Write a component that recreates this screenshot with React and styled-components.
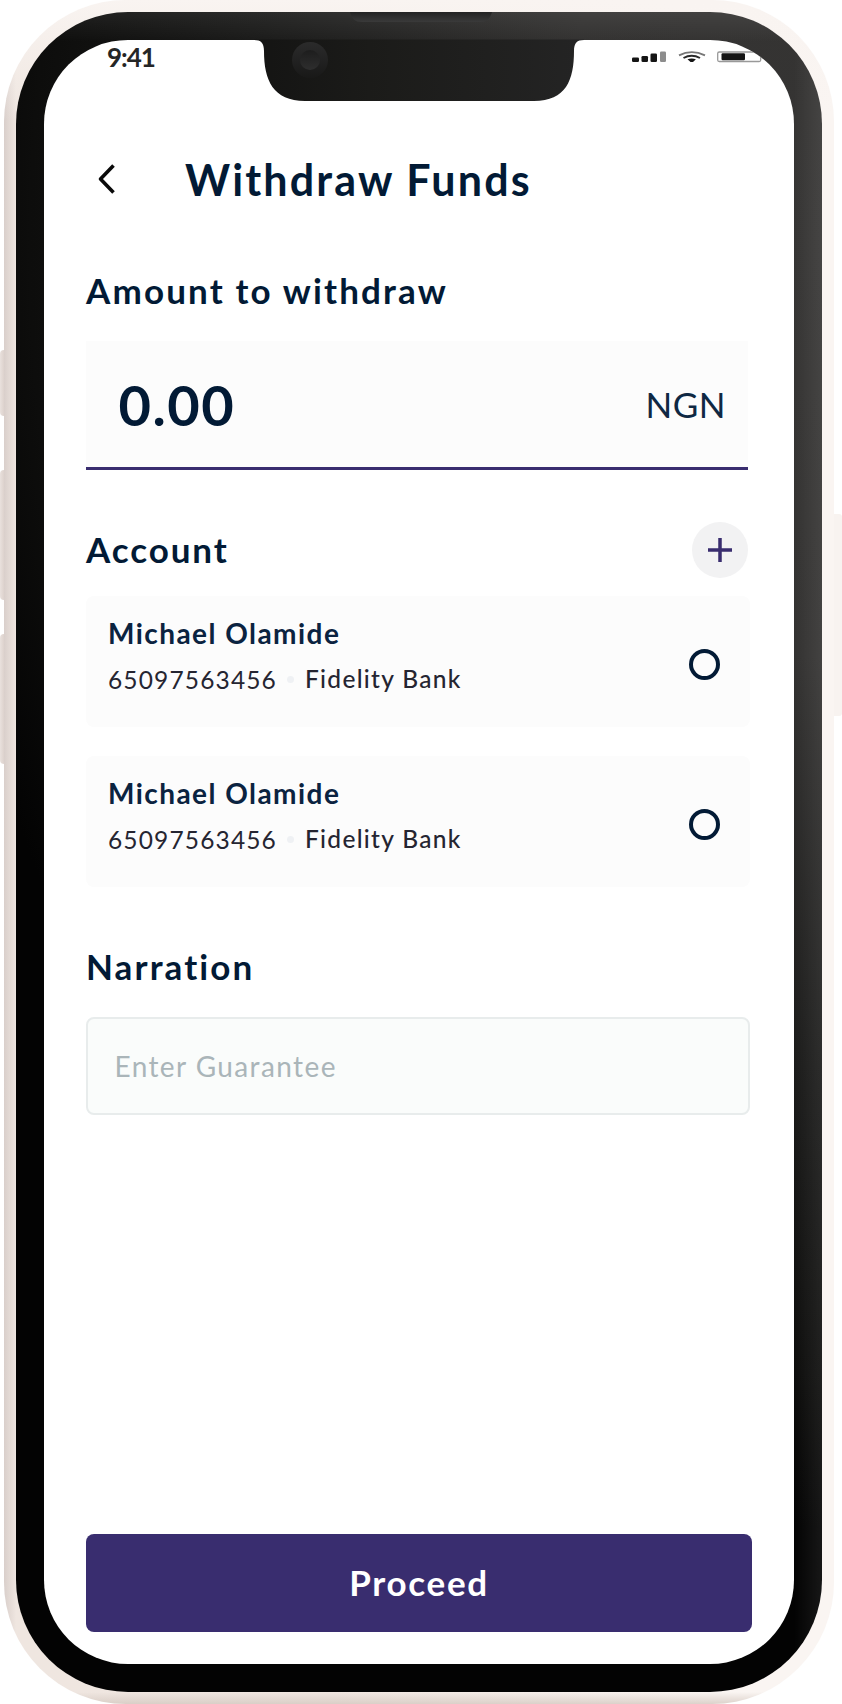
import React from "react";
import styled, { createGlobalStyle } from "styled-components";

const navy = "#021a35";
const purple = "#392d6f";

const GlobalStyle = createGlobalStyle`
  * { box-sizing: border-box; }
  body { margin: 0; background: #fff; font-family: Lato, "Open Sans", sans-serif; color: ${navy}; }
  button, input { font-family: inherit; border: 0; padding: 0; background: none; }
`;

const Stage = styled.div`
  position: relative;
  width: 842px;
  height: 1704px;
  padding: 0 8px 0 4px;
  overflow: hidden;
`;

const SideButton = styled.i`
  position: absolute;
  ${p => p.$side}: 0;
  top: ${p => p.$top}px;
  width: ${p => (p.$side === "left" ? 4 : 8)}px;
  height: ${p => p.$height}px;
  border-radius: ${p => (p.$side === "left" ? "4px 0 0 4px" : "0 3px 3px 0")};
  background: ${p => (p.$side === "left" ? "linear-gradient(90deg, #e9e1dd, #ddd2cd)" : "#f8f3f0")};
`;

const Frame = styled.div`
  height: 100%;
  padding: 12px;
  border-radius: 122px;
  background:
    linear-gradient(180deg, rgba(213, 201, 193, 0) 99.3%, rgba(213, 201, 193, 0.8) 100%),
    linear-gradient(180deg, #f9f4f1 0, rgba(249, 244, 241, 0) 120px),
    linear-gradient(90deg, #d9cfcb 0, #efe6e0 12px, #f0e6e0 40%, #faf5f2 85%);
`;

const Bezel = styled.div`
  height: 100%;
  padding: 28px;
  border-radius: 112px;
  background:
    linear-gradient(180deg, rgba(255, 255, 255, 0.07) 0, rgba(255, 255, 255, 0) 30px),
    linear-gradient(90deg, rgba(255, 255, 255, 0) 778px, rgba(255, 255, 255, 0.08) 806px),
    radial-gradient(ellipse 900px 1280px at 100% 14%, #363534 0, #333231 32%, #1b1b1a 64%, #0d0d0c 88%, #030303 100%);
`;

const Screen = styled.div`
  position: relative;
  height: 100%;
  border-radius: 84px;
  overflow: hidden;
  background: #fff;
  display: flex;
  flex-direction: column;
`;

const Notch = styled.svg`
  position: absolute;
  left: 251px;
  top: 12px;
`;

const StatusBar = styled.div`
  display: flex;
  justify-content: space-between;
  height: 60px;
  padding: 4px 32px 0 63px;
`;

const Time = styled.span`
  font-size: 26px;
  line-height: 26px;
  font-weight: 700;
  letter-spacing: -1px;
  color: #252525;
`;

const StatusIcons = styled.svg`
  margin-top: 5px;
`;

const Header = styled.header`
  display: flex;
  align-items: center;
  height: 50px;
  margin-top: 55px;
  padding-left: 53px;
`;

const BackButton = styled.button`
  width: 20px;
  height: 32px;
  margin: -2px 68px 0 0;
`;

const Title = styled.h1`
  margin: 0;
  font-size: 43px;
  line-height: 50px;
  font-weight: 700;
  letter-spacing: 2.15px;
  white-space: nowrap;
`;

const Form = styled.main`
  flex: 1;
  display: flex;
  flex-direction: column;
  padding: 66px 42px 32px;
`;

const Label = styled.h2`
  margin: 0;
  padding-bottom: 2px;
  font-size: 35px;
  line-height: 38px;
  font-weight: 700;
  letter-spacing: ${p => p.$spacing || 2.15}px;
  white-space: nowrap;
`;

const AmountField = styled.div`
  display: flex;
  justify-content: space-between;
  align-items: center;
  width: 662px;
  height: 129px;
  margin-top: 30px;
  padding: 0 22px 0 32.5px;
  background: #fcfcfc;
  border-bottom: 3.5px solid ${purple};
`;

const Amount = styled.span`
  padding-top: 1px;
  font-size: 56px;
  line-height: 60px;
  font-weight: 700;
  letter-spacing: 1.5px;
`;

const Currency = styled.span`
  font-size: 35px;
  line-height: 58px;
  padding-bottom: 1px;
  letter-spacing: 0.5px;
  color: #0f2843;
`;

const SectionHead = styled.div`
  display: flex;
  align-items: center;
  justify-content: space-between;
  width: 662px;
  height: 56px;
  margin: 52px 0 18px;
`;

const AddButton = styled.button`
  display: grid;
  place-items: center;
  width: 56px;
  height: 56px;
  border-radius: 50%;
  background: #f2f2f3;
`;

const AccountList = styled.div`
  display: flex;
  flex-direction: column;
  gap: 29px;
`;

const AccountCard = styled.div`
  display: flex;
  justify-content: space-between;
  width: 664px;
  height: 131px;
  padding: 22px 30px 0 22px;
  border-radius: 8px;
  background: #fcfcfc;
`;

const Holder = styled.div`
  font-size: 28px;
  line-height: 30px;
  font-weight: 700;
  letter-spacing: 1.45px;
  color: #0b2340;
`;

const Details = styled.div`
  display: flex;
  align-items: center;
  margin-top: 15px;
  font-size: 24.5px;
  line-height: 30px;
  color: #252531;
`;

const AccountNumber = styled.span`
  padding-top: 2px;
  letter-spacing: 1.15px;
`;

const Dot = styled.i`
  width: 7px;
  height: 7px;
  margin: 0 11px 0 10px;
  border-radius: 50%;
  background: #eff1f4;
`;

const Bank = styled.span`
  font-weight: 500;
  letter-spacing: 1.3px;
`;

const Radio = styled.span`
  width: 31px;
  height: 31px;
  margin-top: 31px;
  border: 4px solid ${navy};
  border-radius: 50%;
`;

const NarrationSection = styled.section`
  margin-top: 60px;
`;

const NarrationInput = styled.input`
  display: block;
  width: 664px;
  height: 98px;
  margin-top: 30px;
  padding: 0 28px 0 26.5px;
  border: 2px solid #e8ecec;
  border-radius: 8px;
  background: #fafcfb;
  font-size: 28px;
  letter-spacing: 1.4px;
  &::placeholder { color: #aab5b9; opacity: 1; }
`;

const ProceedButton = styled.button`
  width: 666px;
  height: 98.5px;
  margin-top: auto;
  padding-bottom: 2px;
  border-radius: 8px;
  background: ${purple};
  color: #fff;
  font-size: 35px;
  line-height: 40px;
  font-weight: 700;
  letter-spacing: 1.7px;
`;

const accounts = [
  { id: 1, holder: "Michael Olamide", number: "65097563456", bank: "Fidelity Bank" },
  { id: 2, holder: "Michael Olamide", number: "65097563456", bank: "Fidelity Bank" },
];

function NotchArt() {
  return (
    <Notch width="336" height="90" viewBox="251 12 336 90">
      <defs>
        <linearGradient id="notch" x1="0" x2="1">
          <stop offset="0" stopColor="#141413" />
          <stop offset="0.35" stopColor="#1b1b19" />
          <stop offset="1" stopColor="#242424" />
        </linearGradient>
        <linearGradient id="speaker" x1="0" x2="0" y1="0" y2="1">
          <stop offset="0" stopColor="#232323" />
          <stop offset="1" stopColor="#3a3a3a" />
        </linearGradient>
        <linearGradient id="ring" x1="0" x2="0" y1="0" y2="1">
          <stop offset="0" stopColor="#2b2b2b" />
          <stop offset="1" stopColor="#191918" />
        </linearGradient>
        <linearGradient id="lens" x1="0" x2="0" y1="0" y2="1">
          <stop offset="0" stopColor="#1d1d1d" />
          <stop offset="1" stopColor="#2e2e2e" />
        </linearGradient>
      </defs>
      <path d="M254 39.5V40C261 40 264 43 264 51C264 80 273 101 305 101H534C566 101 574 80 574 51C574 43 577 40 584 40V39.5Z" fill="url(#notch)" />
      <path d="M350 12H492C490 19 487 22 480 22H362C355 22 352 19 350 12Z" fill="url(#speaker)" />
      <circle cx="310" cy="60" r="18" fill="url(#ring)" />
      <circle cx="310" cy="60" r="10" fill="url(#lens)" />
    </Notch>
  );
}

function StatusArt() {
  return (
    <StatusIcons width="131" height="14" viewBox="631 49 131 14">
      <g fill="#151515">
        <rect x="632" y="57.5" width="7" height="4.5" rx="1.3" />
        <rect x="641.5" y="56" width="6.5" height="6" rx="1.3" />
        <rect x="650.5" y="53.5" width="6.5" height="8.5" rx="1.3" />
        <rect x="660" y="51.5" width="6" height="10.5" rx="1.3" fill="#8d8d8d" />
        <path d="M687.5 59.2Q691.7 57.8 695.9 59.2L693 62H690.5Z" />
      </g>
      <path d="M679 55.4Q691.7 48.8 705 55.4" fill="none" stroke="#777" strokeWidth="1.8" />
      <path d="M683.5 58Q691.7 53.4 700 58" fill="none" stroke="#2a2a2a" strokeWidth="2" />
      <rect x="717.7" y="52" width="43" height="9.5" rx="1.5" fill="none" stroke="#999" strokeWidth="1.3" />
      <rect x="721.5" y="53.2" width="23.5" height="7" rx="1.2" fill="#151515" />
    </StatusIcons>
  );
}

export default function App() {
  return (
    <Stage>
      <GlobalStyle />
      <SideButton $side="left" $top={350} $height={66} />
      <SideButton $side="left" $top={470} $height={130} />
      <SideButton $side="left" $top={634} $height={130} />
      <SideButton $side="right" $top={514} $height={202} />
      <Frame>
        <Bezel>
          <Screen>
            <StatusBar>
              <Time>9:41</Time>
              <StatusArt />
            </StatusBar>
            <Header>
              <BackButton aria-label="Back">
                <svg width="20" height="32" viewBox="0 0 20 32" fill="none" stroke="#0a0a0a" strokeWidth="3.6" strokeLinejoin="round">
                  <path d="M16.5 2.5L3.5 16L16.5 29.5" />
                </svg>
              </BackButton>
              <Title>Withdraw Funds</Title>
            </Header>
            <Form>
              <Label>Amount to withdraw</Label>
              <AmountField>
                <Amount>0.00</Amount>
                <Currency>NGN</Currency>
              </AmountField>
              <SectionHead>
                <Label $spacing={1.9}>Account</Label>
                <AddButton aria-label="Add account">
                  <svg width="24" height="24" viewBox="0 0 24 24" stroke={purple} strokeWidth="3.5">
                    <path d="M12 0V24M0 12H24" />
                  </svg>
                </AddButton>
              </SectionHead>
              <AccountList>
                {accounts.map(a => (
                  <AccountCard key={a.id}>
                    <div>
                      <Holder>{a.holder}</Holder>
                      <Details>
                        <AccountNumber>{a.number}</AccountNumber>
                        <Dot />
                        <Bank>{a.bank}</Bank>
                      </Details>
                    </div>
                    <Radio />
                  </AccountCard>
                ))}
              </AccountList>
              <NarrationSection>
                <Label $spacing={2.1}>Narration</Label>
                <NarrationInput placeholder="Enter Guarantee" />
              </NarrationSection>
              <ProceedButton>Proceed</ProceedButton>
            </Form>
          </Screen>
        </Bezel>
      </Frame>
      <NotchArt />
    </Stage>
  );
}
